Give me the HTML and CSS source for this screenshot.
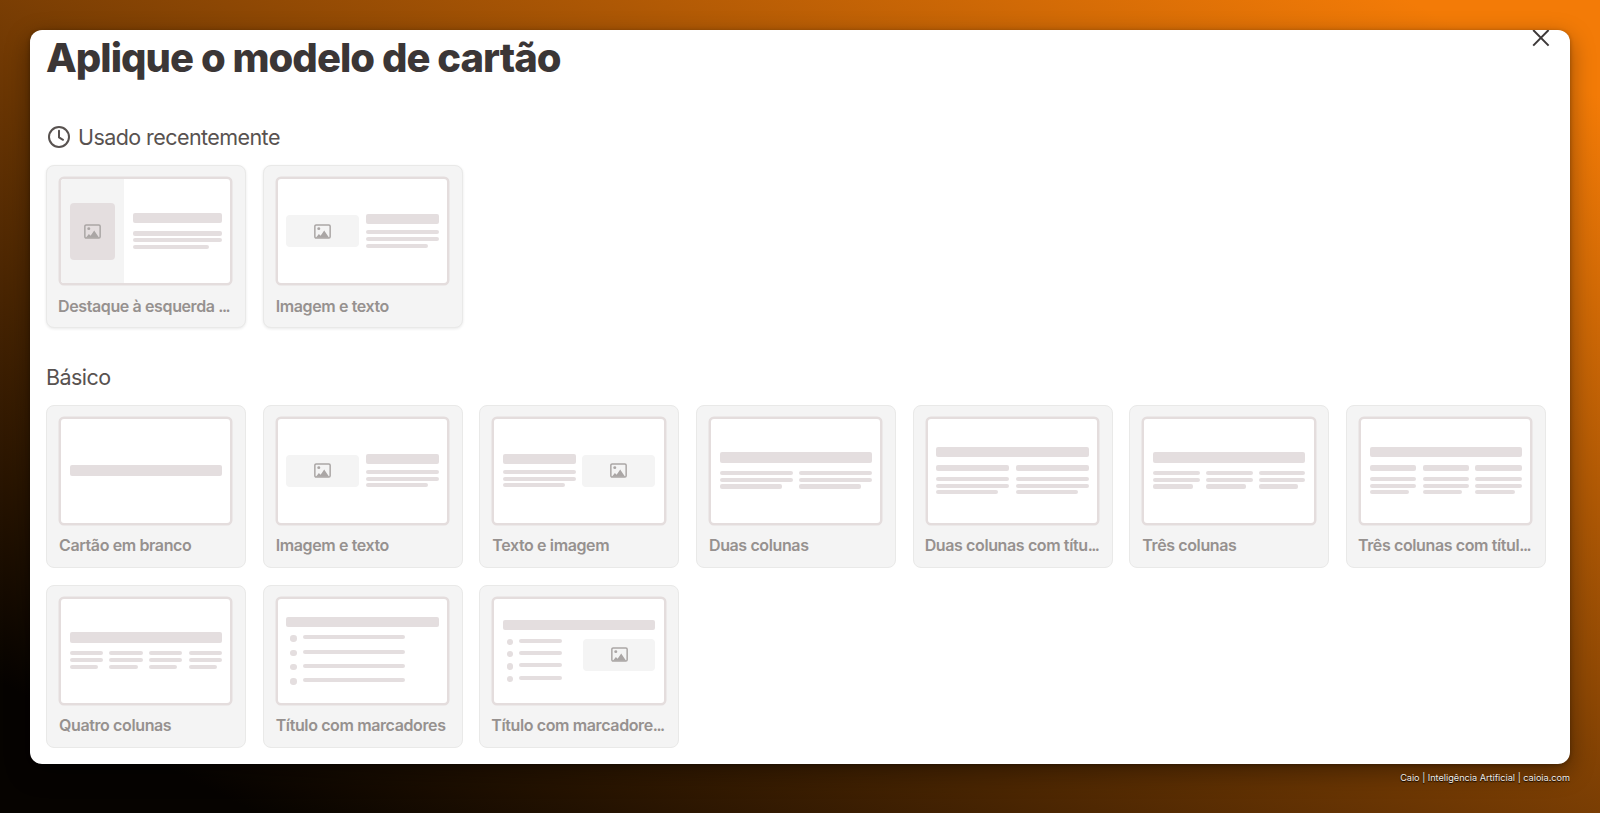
FILE: index.html
```
<!DOCTYPE html>
<html lang="pt-BR">
<head>
<meta charset="utf-8">
<title>Aplique o modelo de cartão</title>
<link rel="stylesheet" href="styles.css">
</head>
<body>
<svg class="sprite" width="0" height="0" aria-hidden="true">
  <symbol id="picture" viewBox="0 0 16 14">
    <rect x=".8" y=".8" width="14.4" height="12.4" rx="1.2" fill="none" stroke="currentColor" stroke-width="1.4"/>
    <circle cx="4.5" cy="4.3" r="1.4" fill="currentColor"/>
    <path d="M1.8 12.8 4.6 9.4l1.6 1.5L9.6 6l4.6 6.8z" fill="currentColor"/>
  </symbol>
</svg>
<main class="modal">
  <header class="head">
    <h1 class="title">Aplique o modelo de cartão</h1>
    <button class="close" aria-label="Fechar"><svg width="18" height="18" viewBox="0 0 18 18"><path d="M1.2 0 16.6 15.6M16.6 0 1.2 15.6" fill="none" stroke="currentColor" stroke-width="2"/></svg></button>
  </header>

  <section class="recent">
    <h2 class="heading"><svg class="clock" width="24" height="24" viewBox="0 0 24 24" fill="none" stroke="currentColor" stroke-width="2" stroke-linecap="round" stroke-linejoin="round"><circle cx="12" cy="12" r="10"/><path d="M12 5.8V12.4L16 14.8"/></svg><span>Usado recentemente</span></h2>
    <div class="grid">
      <article class="card raised">
        <div class="thumb accent">
          <div class="side"><div class="side-pic"><svg class="pic"><use href="#picture"/></svg></div></div>
          <div class="side-text"><i class="bar"></i><div class="lines"><i></i><i></i><i></i></div></div>
        </div>
        <p class="label cut">Destaque à esquerda <span class="dots">...</span></p>
      </article>
      <article class="card raised">
        <div class="thumb"><div class="cols mid"><div class="image"><svg class="pic"><use href="#picture"/></svg></div><div class="text"><i class="bar"></i><div class="lines"><i></i><i></i><i></i></div></div></div></div>
        <p class="label">Imagem e texto</p>
      </article>
    </div>
  </section>

  <section class="basic">
    <h2 class="heading">Básico</h2>
    <div class="grid">
      <article class="card">
        <div class="thumb"><i class="bar"></i></div>
        <p class="label">Cartão em branco</p>
      </article>
      <article class="card">
        <div class="thumb"><div class="cols mid"><div class="image"><svg class="pic"><use href="#picture"/></svg></div><div class="text"><i class="bar"></i><div class="lines"><i></i><i></i><i></i></div></div></div></div>
        <p class="label">Imagem e texto</p>
      </article>
      <article class="card">
        <div class="thumb"><div class="cols mid"><div class="text"><i class="bar"></i><div class="lines"><i></i><i></i><i></i></div></div><div class="image"><svg class="pic"><use href="#picture"/></svg></div></div></div>
        <p class="label">Texto e imagem</p>
      </article>
      <article class="card">
        <div class="thumb"><i class="bar"></i><div class="cols"><div class="lines"><i></i><i></i><i></i></div><div class="lines"><i></i><i></i><i></i></div></div></div>
        <p class="label">Duas colunas</p>
      </article>
      <article class="card">
        <div class="thumb"><i class="bar"></i><div class="cols"><div class="text"><i class="sub"></i><div class="lines"><i></i><i></i><i></i></div></div><div class="text"><i class="sub"></i><div class="lines"><i></i><i></i><i></i></div></div></div></div>
        <p class="label cut">Duas colunas com títu<span class="dots">...</span></p>
      </article>
      <article class="card">
        <div class="thumb"><i class="bar"></i><div class="cols"><div class="lines"><i></i><i></i><i></i></div><div class="lines"><i></i><i></i><i></i></div><div class="lines"><i></i><i></i><i></i></div></div></div>
        <p class="label">Três colunas</p>
      </article>
      <article class="card">
        <div class="thumb"><i class="bar"></i><div class="cols"><div class="text"><i class="sub"></i><div class="lines"><i></i><i></i><i></i></div></div><div class="text"><i class="sub"></i><div class="lines"><i></i><i></i><i></i></div></div><div class="text"><i class="sub"></i><div class="lines"><i></i><i></i><i></i></div></div></div></div>
        <p class="label cut">Três colunas com títul<span class="dots">...</span></p>
      </article>
      <article class="card">
        <div class="thumb"><i class="bar"></i><div class="cols"><div class="lines"><i></i><i></i><i></i></div><div class="lines"><i></i><i></i><i></i></div><div class="lines"><i></i><i></i><i></i></div><div class="lines"><i></i><i></i><i></i></div></div></div>
        <p class="label">Quatro colunas</p>
      </article>
      <article class="card">
        <div class="thumb top-list"><i class="bar"></i><ul class="bullets"><li></li><li></li><li></li><li></li></ul></div>
        <p class="label">Título com marcadores</p>
      </article>
      <article class="card">
        <div class="thumb top-split"><i class="bar"></i><div class="cols"><ul class="bullets"><li></li><li></li><li></li><li></li></ul><div class="image"><svg class="pic"><use href="#picture"/></svg></div></div></div>
        <p class="label cut">Título com marcadore<span class="dots">...</span></p>
      </article>
    </div>
  </section>
</main>
<footer class="credit">Caio | Inteligência Artificial | caioia.com</footer>
</body>
</html>
```
FILE: styles.css
```
* { box-sizing: border-box; margin: 0; padding: 0; }
body {
  height: 813px;
  overflow: hidden;
  padding: 30px 30px 0;
  background: linear-gradient(to top right, #060300 8%, #f37b07 94%);
  font-family: Inter, "Liberation Sans", sans-serif;
}
.sprite { display: block; }
.modal {
  width: 1540px;
  height: 734px;
  padding: 0 24px 0 16px;
  border-radius: 12px;
  background: #fff;
  box-shadow: 0 8px 24px rgba(0, 0, 0, .38), 0 1px 4px rgba(0, 0, 0, .3);
}
.head { display: flex; justify-content: space-between; align-items: flex-start; height: 88px; }
.title { font-size: 40px; line-height: 56px; font-weight: 800; letter-spacing: -.97px; color: #3b3636; white-space: nowrap; }
.close { display: block; width: 18px; height: 18px; margin-right: -4px; border: 0; background: none; color: #3d3838; }
.close svg { display: block; }
.heading { display: flex; align-items: center; gap: 7px; height: 38px; font-size: 21.5px; font-weight: 400; letter-spacing: -.57px; color: #585250; white-space: nowrap; }
.clock { margin-left: 1px; }
.recent { height: 240px; }
.recent .grid { margin-top: 9px; }
.basic .grid { margin-top: 8.5px; }
.grid { display: grid; grid-template-columns: repeat(7, 200px); gap: 16.67px; }
.card {
  height: 163.4px;
  padding: 11px 12px 0;
  border: 1.4px solid #e9e9e8;
  border-radius: 8px;
  background: #f4f4f4;
}
.raised { box-shadow: 0 1px 3px rgba(0, 0, 0, .09); }
.thumb {
  display: flex;
  flex-direction: column;
  justify-content: center;
  gap: 8.2px;
  width: 173.3px;
  height: 108px;
  padding: 0 8.2px 0 8.8px;
  border: 2px solid #e4dddd;
  border-radius: 5px;
  background: #fff;
  box-shadow: 0 0 0 .5px #e4dddd;
  overflow: hidden;
}
.label { margin-top: 10.6px; font-size: 16px; line-height: 20px; font-weight: 600; letter-spacing: -.38px; color: #96918f; white-space: nowrap; }
.cut { margin-left: -1px; }
.dots { letter-spacing: -1.5px; }
.bar { display: block; flex: none; height: 10.3px; border-radius: 2px; background: #e4dedf; }
.sub { display: block; height: 6px; border-radius: 2px; background: #e4dedf; }
.cols { display: flex; gap: 6.3px; }
.cols > * { flex: 1 1 0; min-width: 0; }
.mid { align-items: center; }
.text { display: flex; flex-direction: column; gap: 5.8px; }
.lines { display: flex; flex-direction: column; gap: 2.7px; }
.lines i { display: block; height: 4.1px; border-radius: 2px; background: #e4dedf; }
.lines i:last-child { width: 85%; }
.image { display: flex; align-items: center; justify-content: center; height: 32px; border-radius: 4px; background: #f4f4f4; }
.pic { display: block; width: 17px; height: 15px; color: #aaa6a5; }
.accent { flex-direction: row; justify-content: flex-start; padding: 0 8.2px 0 0; }
.side { display: flex; align-items: center; justify-content: center; width: 63.4px; margin-right: .3px; background: #f4f4f4; }
.side-pic { display: flex; align-items: center; justify-content: center; width: 44.5px; height: 57px; border-radius: 4px; background: #e4dedf; }
.side-text { display: flex; flex-direction: column; justify-content: center; flex: 1; gap: 8.2px; }
.top-list, .top-split { justify-content: flex-start; }
.top-list { padding-top: 18.3px; }
.top-split { padding-top: 21.6px; }
.bullets { display: flex; flex-direction: column; gap: 8px; list-style: none; padding-left: 4px; }
.bullets li { display: flex; align-items: flex-start; gap: 6px; height: 6.3px; }
.bullets li::before { content: ""; width: 6.3px; height: 6.3px; border-radius: 50%; background: #e4dedf; }
.bullets li::after { content: ""; width: 102px; height: 4.1px; border-radius: 2px; background: #e4dedf; }
.top-split .cols { gap: 4px; }
.top-split .bullets { gap: 6px; }
.top-split .bullets li::after { width: 42.7px; }
.credit {
  margin-top: 7px;
  text-align: right;
  font-size: 9.15px;
  line-height: 14px;
  color: #f0ece8;
  text-shadow: 0 1px 1px #000;
}
```
